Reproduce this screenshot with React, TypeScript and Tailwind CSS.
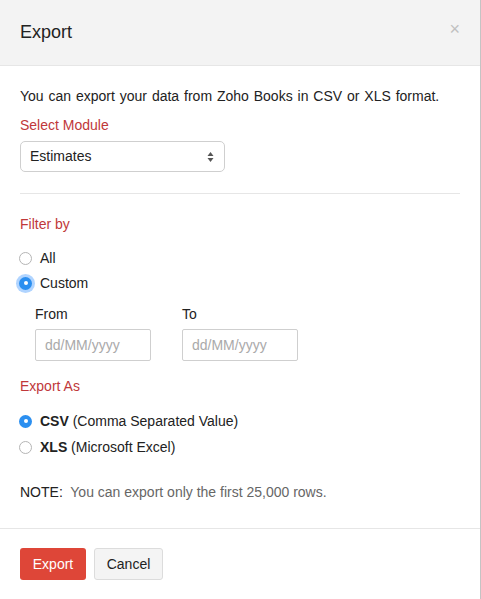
import React, { useState } from "react";

function Radio({ checked, focused }: { checked: boolean; focused?: boolean }) {
  if (checked) {
    return (
      <span
        className={`ml-[-1px] flex h-[13px] w-[13px] items-center justify-center rounded-full bg-[#2b8ff0] ${
          focused ? "shadow-[0_0_0_3px_rgba(80,160,255,0.45)]" : ""
        }`}
      >
        <span className="h-[4px] w-[4px] rounded-full bg-white" />
      </span>
    );
  }
  return <span className="ml-[-1px] h-[13px] w-[13px] rounded-full border border-[#b5b5b5] bg-white" />;
}

export default function App() {
  const [filter, setFilter] = useState("custom");
  const [format, setFormat] = useState("csv");

  return (
    <div
      className="flex h-[599px] w-[481px] flex-col border-r border-[#c4c4c4] bg-white text-[14px] text-[#222]"
      style={{ fontFamily: '"Liberation Sans", Arial, sans-serif' }}
    >
      {/* Header */}
      <div className="flex h-[66px] items-start justify-between border-b border-[#e6e6e6] bg-[#f3f3f3] px-[20px] pt-[21px]">
        <h3 className="text-[18px] leading-[22px] text-[#222]">Export</h3>
        <span className="mt-[-2px] text-[18px] leading-[20px] text-[#c0c0c0]">×</span>
      </div>

      {/* Body */}
      <div className="flex-1 px-[20px] pt-[21px]">
        <p className="leading-[18px] [word-spacing:1px]">You can export your data from Zoho Books in CSV or XLS format.</p>
        <div className="mt-[11px] leading-[18px] text-[#c0383a]">Select Module</div>
        <div className="mt-[7px] flex h-[31px] w-[205px] items-center justify-between rounded-[5px] border border-[#cfcfcf] pl-[9px] pr-[10px]">
          <span>Estimates</span>
          <svg width="7" height="12" viewBox="0 0 7 12" fill="#555">
            <path d="M3.5 1 L6.5 5 H0.5 Z" />
            <path d="M3.5 11 L6.5 7 H0.5 Z" />
          </svg>
        </div>

        <div className="mt-[21px] border-t border-[#e6e6e6]" />

        <div className="mt-[21px] leading-[18px] text-[#c0383a]">Filter by</div>
        <div className="mt-[16px] flex flex-col gap-[7px]">
          <label className="flex items-center gap-[8px] leading-[18px]" onClick={() => setFilter("all")}>
            <Radio checked={filter === "all"} />
            <span>All</span>
          </label>
          <label className="flex items-center gap-[8px] leading-[18px]" onClick={() => setFilter("custom")}>
            <Radio checked={filter === "custom"} focused />
            <span>Custom</span>
          </label>
        </div>

        <div className="mt-[13px] flex gap-[31px] pl-[15px]">
          <div className="flex flex-col">
            <span className="leading-[18px]">From</span>
            <div className="mt-[6px] flex h-[32px] w-[116px] items-center rounded-[2px] border border-[#cfcfcf] px-[9px] text-[#aaa]">
              dd/MM/yyyy
            </div>
          </div>
          <div className="flex flex-col">
            <span className="leading-[18px]">To</span>
            <div className="mt-[6px] flex h-[32px] w-[116px] items-center rounded-[2px] border border-[#cfcfcf] px-[9px] text-[#aaa]">
              dd/MM/yyyy
            </div>
          </div>
        </div>

        <div className="mt-[16px] leading-[18px] text-[#c0383a]">Export As</div>
        <div className="mt-[17px] flex flex-col gap-[8px]">
          <label className="flex items-center gap-[8px] leading-[18px]" onClick={() => setFormat("csv")}>
            <Radio checked={format === "csv"} />
            <span>
              <b>CSV</b> (Comma Separated Value)
            </span>
          </label>
          <label className="flex items-center gap-[8px] leading-[18px]" onClick={() => setFormat("xls")}>
            <Radio checked={format === "xls"} />
            <span>
              <b>XLS</b> (Microsoft Excel)
            </span>
          </label>
        </div>

        <p className="mt-[27px] leading-[18px]">
          NOTE:&nbsp; <span className="text-[#666]">You can export only the first 25,000 rows.</span>
        </p>
      </div>

      {/* Footer */}
      <div className="flex h-[71px] items-start gap-[8px] border-t border-[#e6e6e6] px-[20px] pt-[19px]">
        <button className="h-[32px] w-[66px] rounded-[3px] bg-[#de4638] text-white">Export</button>
        <button className="h-[32px] w-[69px] rounded-[3px] border border-[#dcdcdc] bg-[#f4f4f4] text-[#222]">
          Cancel
        </button>
      </div>
    </div>
  );
}
